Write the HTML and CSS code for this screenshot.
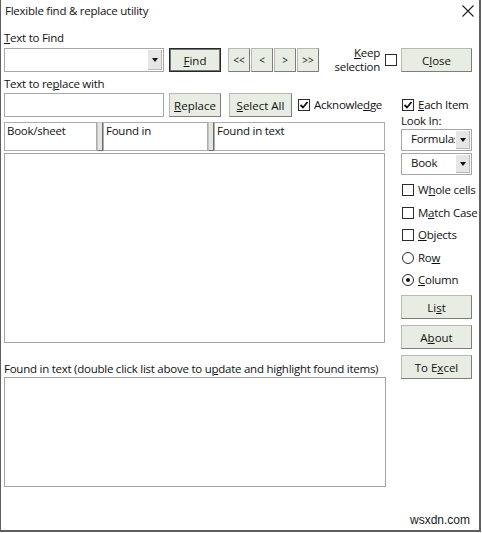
FILE: index.html
```html
<!DOCTYPE html>
<html lang="en">
<head>
  <meta charset="UTF-8">
  <title>Flexible find &amp; replace utility</title>
  <link rel="stylesheet" href="styles.css">
</head>
<body>
  <div class="window">
    <div class="titlebar">
      <span class="title">Flexible find &amp; replace utility</span>
      <svg class="close-x" width="12" height="12" viewBox="0 0 12 12">
        <path d="M0.5 0.5 L11.5 11.5 M11.5 0.5 L0.5 11.5" stroke="#222" stroke-width="1.1" fill="none"/>
      </svg>
    </div>

    <div class="body">
      <div class="main">
        <div class="label"><u>T</u>ext to Find</div>
        <div class="row">
          <div class="combo wide">
            <span class="combo-text"></span>
            <span class="arrow"><i class="tri"></i></span>
          </div>
          <button class="btn btn-default find"><span><u>F</u>ind</span></button>
          <div class="nav">
            <button class="btn nav-btn">&lt;&lt;</button>
            <button class="btn nav-btn">&lt;</button>
            <button class="btn nav-btn">&gt;</button>
            <button class="btn nav-btn">&gt;&gt;</button>
          </div>
          <div class="keep"><u>K</u>eep<br>selection</div>
          <span class="box keep-box"></span>
        </div>

        <div class="label label-replace">Text to re<u>p</u>lace with</div>
        <div class="row">
          <div class="textbox wide"></div>
          <button class="btn replace"><span><u>R</u>eplace</span></button>
          <button class="btn select-all"><span><u>S</u>elect All</span></button>
          <label class="check ack">
            <span class="box checked">
              <svg width="10" height="10" viewBox="0 0 10 10"><path d="M1.5 5 L4 7.5 L8.5 2" stroke="#111" stroke-width="1.8" fill="none"/></svg>
            </span>
            <span>Acknowle<u>d</u>ge</span>
          </label>
        </div>

        <div class="headers">
          <div class="hcell h-book">Book/sheet</div>
          <div class="grip"></div>
          <div class="hcell h-found">Found in</div>
          <div class="grip"></div>
          <div class="hcell h-text">Found in text</div>
        </div>
        <div class="list"></div>

        <div class="label label-found">Found in text (double click list above to u<u>p</u>date and highlight found items)</div>
        <div class="textarea"></div>
      </div>

      <div class="side">
        <button class="btn side-btn close-btn"><span>C<u>l</u>ose</span></button>

        <label class="check each-item">
          <span class="box checked">
            <svg width="10" height="10" viewBox="0 0 10 10"><path d="M1.5 5 L4 7.5 L8.5 2" stroke="#111" stroke-width="1.8" fill="none"/></svg>
          </span>
          <span><u>E</u>ach Item</span>
        </label>
        <div class="label look-in">Look In:</div>
        <div class="combo small formulas">
          <span class="combo-text">Formulas</span>
          <span class="arrow"><i class="tri"></i></span>
        </div>
        <div class="combo small book">
          <span class="combo-text">Book</span>
          <span class="arrow"><i class="tri"></i></span>
        </div>

        <label class="check opt first-opt"><span class="box"></span><span>W<u>h</u>ole cells</span></label>
        <label class="check opt"><span class="box"></span><span>M<u>a</u>tch Case</span></label>
        <label class="check opt"><span class="box"></span><span><u>O</u>bjects</span></label>
        <label class="check opt"><span class="radio"></span><span>Ro<u>w</u></span></label>
        <label class="check opt"><span class="radio on"></span><span><u>C</u>olumn</span></label>

        <button class="btn side-btn list-btn"><span>Li<u>s</u>t</span></button>
        <button class="btn side-btn"><span>A<u>b</u>out</span></button>
        <button class="btn side-btn"><span>To E<u>x</u>cel</span></button>
      </div>
    </div>

    <div class="watermark">wsxdn.com</div>
  </div>
</body>
</html>
```

FILE: styles.css
```css
* {
  box-sizing: border-box;
}

body {
  margin: 0;
  background: #ffffff;
  font-family: "Open Sans", "Liberation Sans", sans-serif;
  font-size: 11.5px;
  letter-spacing: -0.25px;
  color: #111111;
}

u {
  text-decoration-thickness: 1px;
  text-underline-offset: 1px;
}

.window {
  position: relative;
  width: 481px;
  height: 532px;
  border: 1px solid #5f5f5f;
  border-top: none;
  border-right-width: 2px;
  border-bottom-width: 2px;
}

.titlebar {
  height: 31px;
  display: flex;
  justify-content: space-between;
  align-items: flex-start;
  padding: 4px 5px 0 4px;
}

.title {
  line-height: 14px;
}

.close-x {
  margin-top: 1px;
}

.body {
  display: grid;
  grid-template-columns: 393px 71px;
  column-gap: 4px;
  padding-left: 3px;
}

/* left column */
.main {
  display: flex;
  flex-direction: column;
}

.label {
  height: 14px;
  line-height: 14px;
  white-space: nowrap;
}

.main > .label:first-child {
  margin-bottom: 3px;
}

.label-replace {
  margin-top: 5px;
  margin-bottom: 2px;
}

.row {
  display: flex;
  align-items: center;
  height: 24px;
}

.combo,
.textbox {
  display: flex;
  background: #ffffff;
  border: 1px solid #a7a7a7;
}

.wide {
  width: 160px;
  height: 24px;
}

.combo-text {
  flex: 1;
  overflow: hidden;
  white-space: nowrap;
  line-height: 20px;
}

.arrow {
  width: 14px;
  margin: 1px;
  background: #e6e6e6;
  border-right: 1px solid #b9b9b9;
  border-bottom: 1px solid #b9b9b9;
  display: flex;
  align-items: center;
  justify-content: center;
}

.tri {
  width: 0;
  height: 0;
  border-left: 3.5px solid transparent;
  border-right: 3.5px solid transparent;
  border-top: 4px solid #111;
}

.btn {
  height: 24px;
  padding: 0;
  font: inherit;
  color: inherit;
  background: #e7ede2;
  border: 1px solid #b7bab3;
  border-right-color: #7d7d7d;
  border-bottom-color: #7d7d7d;
  display: flex;
  align-items: center;
  justify-content: center;
}

.btn-default {
  border: 1px solid #262626;
  box-shadow: inset 0 0 0 1px #777777;
}

.find {
  width: 52px;
  margin-left: 5px;
}

.nav {
  display: flex;
  gap: 1px;
  margin-left: 7px;
}

.nav-btn {
  width: 22px;
  font-size: 10px;
}

.keep {
  margin-left: auto;
  text-align: right;
  line-height: 14px;
}

.keep-box {
  margin-left: 5px;
}

.box {
  width: 12px;
  height: 12px;
  flex: none;
  border: 1px solid #2a2a2a;
  background: #ffffff;
  display: flex;
  align-items: center;
  justify-content: center;
}

.radio {
  width: 12px;
  height: 12px;
  flex: none;
  border: 1px solid #2a2a2a;
  border-radius: 50%;
  background: #ffffff;
  display: flex;
  align-items: center;
  justify-content: center;
}

.radio.on::after {
  content: "";
  width: 4px;
  height: 4px;
  border-radius: 50%;
  background: #111;
}

.replace {
  width: 52px;
  margin-left: 5px;
}

.select-all {
  width: 63px;
  margin-left: 8px;
}

.check {
  display: flex;
  align-items: center;
  gap: 4px;
  line-height: 14px;
  height: 14px;
  white-space: nowrap;
}

.ack {
  margin-left: 6px;
}

.headers {
  display: flex;
  width: 381px;
  height: 29px;
  margin-top: 5px;
}

.hcell {
  border: 1px solid #acacac;
  padding: 1px 2px;
  line-height: 14px;
  background: #ffffff;
}

.h-book {
  width: 93px;
}

.h-found {
  width: 105px;
}

.h-text {
  width: 171px;
}

.grip {
  width: 6px;
  background: #e3e7df;
  border: 1px solid #c4c4c4;
  border-right-color: #6e6e6e;
  border-bottom-color: #6e6e6e;
}

.list {
  width: 381px;
  height: 190px;
  margin-top: 2px;
  border: 1px solid #a5a5a5;
}

.label-found {
  margin-top: 19px;
  margin-bottom: 1px;
}

.textarea {
  width: 382px;
  height: 110px;
  border: 1px solid #a5a5a5;
}

/* right column */
.side {
  display: flex;
  flex-direction: column;
}

.side-btn {
  width: 71px;
}

.close-btn {
  margin-top: 17px;
}

.each-item {
  margin-top: 26px;
  margin-left: 1px;
}

.look-in {
  margin-top: 2px;
}

.small {
  width: 71px;
  height: 22px;
  margin-top: 2px;
}

.small .combo-text {
  padding-left: 9px;
  line-height: 18px;
}

.formulas {
  margin-top: 1px;
}

.opt {
  height: 16px;
  margin-left: 1px;
  margin-top: 6.5px;
}

.first-opt {
  margin-top: 7px;
}

.list-btn {
  margin-top: 7px;
}

.side-btn + .side-btn {
  margin-top: 6px;
}

.watermark {
  position: absolute;
  right: 9px;
  bottom: 3px;
  font-family: "Liberation Sans", Arial, sans-serif;
  font-size: 12px;
  letter-spacing: 0;
  line-height: 14px;
  color: #222;
}
```
